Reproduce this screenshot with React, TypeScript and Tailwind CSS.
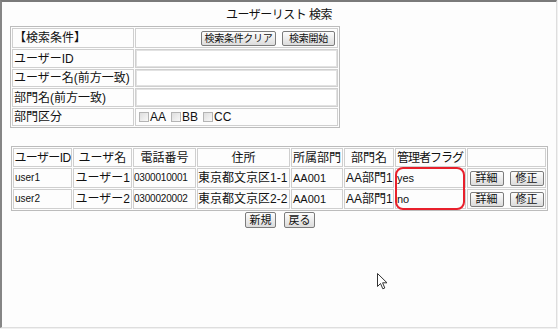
import React from 'react';

const FONT = "font-['Liberation_Sans','Noto_Sans_CJK_JP',sans-serif]";
const CELL = 'border border-[#cfcfcf] p-0 font-normal align-middle whitespace-nowrap overflow-hidden';
const BTN =
  'h-[15px] whitespace-nowrap border border-[#7c7c7c] rounded-[2px] bg-gradient-to-b from-[#fdfdfd] to-[#dcdcdc] leading-[13px] text-[#111]';

function Btn({ children, className = 'text-[11px] px-[4px]' }: { children: React.ReactNode; className?: string }) {
  return <button className={`${BTN} ${className}`}>{children}</button>;
}

function Check({ label }: { label: string }) {
  return (
    <span className="flex items-center mr-[5px]">
      <span className="w-[10px] h-[10px] border border-[#b4b4b4] bg-gradient-to-br from-[#dedede] to-[#f8f8f8] mr-[1px]" />
      <span className="text-[12px] leading-[14px]">{label}</span>
    </span>
  );
}

const SEARCH_ROWS = [
  { label: 'ユーザーID', h: 'h-[19px]', ih: 'h-[17px]' },
  { label: 'ユーザー名(前方一致)', h: 'h-[18px]', ih: 'h-[16px]' },
  { label: '部門名(前方一致)', h: 'h-[19px]', ih: 'h-[17px]' },
];

const USERS = [
  { id: 'user1', name: 'ユーザー1', tel: '0300010001', addr: '東京都文京区1-1', dept: 'AA001', deptName: 'AA部門1', admin: 'yes' },
  { id: 'user2', name: 'ユーザー2', tel: '0300020002', addr: '東京都文京区2-2', dept: 'AA001', deptName: 'AA部門1', admin: 'no' },
];

const HEADERS = [
  { t: 'ユーザーID', w: 'w-[59px]', x: 'tracking-[-0.6px]' },
  { t: 'ユーザ名', w: 'w-[59px]', x: '' },
  { t: '電話番号', w: 'w-[63px]', x: '' },
  { t: '住所', w: 'w-[93px]', x: '' },
  { t: '所属部門', w: 'w-[52px]', x: '' },
  { t: '部門名', w: 'w-[50px]', x: '' },
  { t: '管理者フラグ', w: 'w-[71px]', x: 'tracking-[-1px] text-left pl-[1px]' },
  { t: '', w: 'w-[79px]', x: '' },
];

function Cursor() {
  return (
    <svg className="absolute left-[377px] top-[273px]" width="12" height="17" viewBox="0 0 12 17">
      <path
        d="M0.5 0.5 L0.5 13.5 L3.5 10.5 L5.8 15.8 L7.8 15 L5.6 9.8 L10 9.8 Z"
        fill="#fff"
        stroke="#333"
        strokeWidth="1"
        strokeLinejoin="round"
      />
    </svg>
  );
}

export default function App() {
  return (
    <div className={`${FONT} relative w-[558px] h-[329px] bg-[#f1f1f1] text-[#111] overflow-hidden`}>
      <div className="w-[557px] h-[328px] bg-[#fdfdfd] border-t-2 border-l-2 border-t-[#7a7a7a] border-l-[#858585] border-r border-b border-r-[#dedede] border-b-[#dedede] flex flex-col">
        <div className="h-[24px] flex items-center justify-center text-[12px] leading-[14px] pt-[1px] tracking-[-0.5px]">
          ユーザーリスト 検索
        </div>

        <table className="ml-[8px] border-separate border-spacing-[1px] border border-[#bcbcbc] w-[330px] table-fixed">
          <tbody>
            <tr>
              <td className={`${CELL} w-[122px] h-[20px] text-[12px] leading-[14px] pl-[1px]`}>【検索条件】</td>
              <td className={`${CELL} h-[20px]`}>
                <div className="flex justify-end gap-[6px] pr-[2px]">
                  <Btn className="w-[75px] text-[10px] px-0 tracking-[-0.3px]">検索条件クリア</Btn>
                  <Btn className="w-[53px] text-[10px] px-0 tracking-[-0.3px]">検索開始</Btn>
                </div>
              </td>
            </tr>
            {SEARCH_ROWS.map((r) => (
              <tr key={r.label}>
                <td className={`${CELL} ${r.h} text-[12px] leading-[14px] pl-[1px]`}>{r.label}</td>
                <td className={`${CELL} ${r.h}`}>
                  <input
                    className={`block w-full ${r.ih} p-0 text-[12px] leading-none border border-[#e2e2e2] bg-white outline-none`}
                  />
                </td>
              </tr>
            ))}
            <tr>
              <td className={`${CELL} h-[18px] text-[12px] leading-[14px] pl-[1px]`}>部門区分</td>
              <td className={`${CELL} h-[18px] pl-[3px]`}>
                <div className="flex items-center">
                  <Check label="AA" />
                  <Check label="BB" />
                  <Check label="CC" />
                </div>
              </td>
            </tr>
          </tbody>
        </table>

        <div className="relative ml-[9px] mt-[18px] w-[537px]">
          <table className="border-separate border-spacing-[1px] border border-[#bcbcbc] w-[537px] table-fixed">
            <thead>
              <tr>
                {HEADERS.map((h, i) => (
                  <th key={i} className={`${CELL} ${h.w} h-[19px] text-[12px] leading-[14px] text-center ${h.x}`}>
                    {h.t}
                  </th>
                ))}
              </tr>
            </thead>
            <tbody>
              {USERS.map((u) => (
                <tr key={u.id}>
                  <td className={`${CELL} h-[20px] text-[10px] leading-[12px] pl-[1px]`}>{u.id}</td>
                  <td className={`${CELL} h-[20px] text-[12px] leading-[14px] text-right pr-[1px]`}>{u.name}</td>
                  <td className={`${CELL} h-[20px] text-[10px] leading-[12px] tracking-[-0.2px]`}>{u.tel}</td>
                  <td className={`${CELL} h-[20px] text-[12px] leading-[14px]`}>{u.addr}</td>
                  <td className={`${CELL} h-[20px] text-[11px] leading-[13px] pl-[1px]`}>{u.dept}</td>
                  <td className={`${CELL} h-[20px] text-[12px] leading-[14px] pl-[1px]`}>{u.deptName}</td>
                  <td className={`${CELL} h-[20px] text-[11px] leading-[13px] pl-[1px]`}>{u.admin}</td>
                  <td className={`${CELL} h-[20px]`}>
                    <div className="flex justify-center gap-[6px]">
                      <Btn className="w-[34px] text-[11px] px-0">詳細</Btn>
                      <Btn className="w-[34px] text-[11px] px-0">修正</Btn>
                    </div>
                  </td>
                </tr>
              ))}
            </tbody>
          </table>
          <div className="absolute left-[384px] top-[21px] w-[70px] h-[43px] border-2 border-[#e8202c] rounded-[8px]" />
        </div>

        <div className="flex justify-center gap-[8px] mt-[1px] pl-[2px]">
          <Btn className="w-[31px] h-[16px] text-[11px] px-0">新規</Btn>
          <Btn className="w-[31px] h-[16px] text-[11px] px-0">戻る</Btn>
        </div>
      </div>
      <Cursor />
    </div>
  );
}
